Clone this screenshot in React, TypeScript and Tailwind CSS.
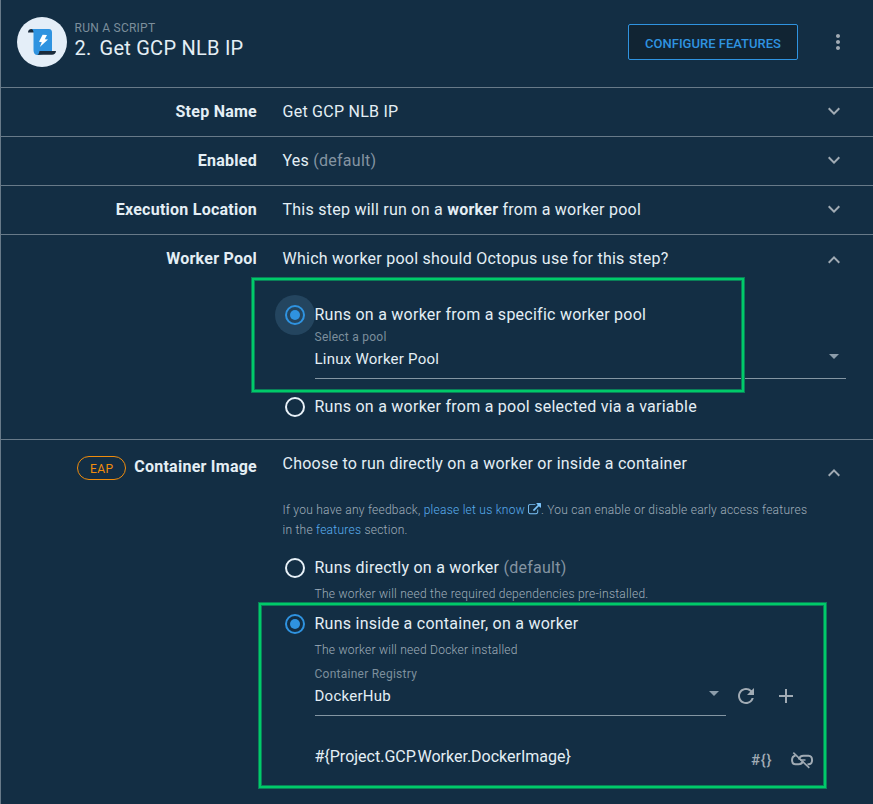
import React from "react";
import { MdAdd, MdArrowDropDown, MdExpandLess, MdExpandMore, MdMoreVert, MdRefresh } from "react-icons/md";

function ScriptIcon() {
  return (
    <svg viewBox="0 0 50 50" className="size-[50px] shrink-0">
      <circle cx="25" cy="25" r="25" fill="#e4eef8" />
      <path d="M11 15.500 Q11 12 14.500 12 H18 V15.500 Z" fill="#1a2b3c" />
      <path d="M14 12 H32 Q35 12 35 15.500 V35 L22 38 H20.500 Q16.500 38 16.500 33 V16 Q16.500 12 14 12 Z" fill="#2f93e0" />
      <path d="M22.500 34 H39 Q38.500 37.800 35 37.800 H20 Q22 37.500 22.500 34 Z" fill="#1a2b3c" />
      <path d="M25.600 17.800 L30 18 L27.800 22.200 L31 22.400 L22.800 30 L24.800 25.200 L22 24.800 Z" fill="#fff" />
    </svg>
  );
}

function ExternalLink() {
  return (
    <svg viewBox="0 0 1792 1792" className="-mt-[2px] ml-[3px] inline size-[13px]" fill="#7cc4fa">
      <path d="M1408 928v320q0 119-84.5 203.5t-203.5 84.5h-832q-119 0-203.5-84.5t-84.5-203.5v-832q0-119 84.5-203.5t203.5-84.5h704q14 0 23 9t9 23v64q0 14-9 23t-23 9h-704q-66 0-113 47t-47 113v832q0 66 47 113t113 47h832q66 0 113-47t47-113v-320q0-14 9-23t23-9h64q14 0 23 9t9 23zm384-864v512q0 26-19 45t-45 19-45-19l-176-176-652 652q-10 10-23 10t-23-10l-114-114q-10-10-10-23t10-23l652-652-176-176q-19-19-19-45t19-45 45-19h512q26 0 45 19t19 45z" />
    </svg>
  );
}

function UnlinkIcon() {
  return (
    <svg viewBox="0 0 24 20" className="mt-[3px] h-5 w-6 text-[#a1abb4]" fill="none" stroke="currentColor" strokeWidth="2">
      <path d="M5.500 5.800 C0.800 6.300 1 14.200 5.500 14.200 H8.500 C10.500 14.200 12.300 13.300 12.800 11.300" />
      <path d="M8.800 9.500 C9.500 7 11.500 5.800 13.500 5.800 H18.500 C23.200 6 23.200 14 18.800 14.200 H17.500" />
      <path d="M10 10 H15.500" strokeWidth="1.500" />
      <path d="M3.300 2.700 L19.300 17.900" strokeWidth="1.600" />
    </svg>
  );
}

function Radio({ checked = false, halo = false }: { checked?: boolean; halo?: boolean }) {
  return (
    <span className={`grid size-10 shrink-0 place-items-center rounded-full ${halo ? "bg-[#24455f]" : ""}`}>
      <span className={`grid size-5 place-items-center rounded-full border-2 ${checked ? "border-[#2f93e0]" : "border-[#e8f1f8]"}`}>
        {checked && <span className="size-[10px] rounded-full bg-[#2f93e0]" />}
      </span>
    </span>
  );
}

function Option({ checked, halo, children }: { checked?: boolean; halo?: boolean; children: React.ReactNode }) {
  return (
    <div className="-ml-[7px] flex h-5 items-center">
      <Radio checked={checked} halo={halo} />
      <span className="-ml-[0.5px]">{children}</span>
    </div>
  );
}

function Row({ label, children }: { label: string; children: React.ReactNode }) {
  return (
    <div className="flex h-[49px] items-center border-b border-[#687a89]">
      <div className="w-[256px] text-right font-bold">{label}</div>
      <div className="ml-[25.500px] flex-1">{children}</div>
      <MdExpandMore className="mr-[27px] mb-[2px] size-6 text-[#a1abb4]" />
    </div>
  );
}

const highlight = "pointer-events-none absolute border-2 border-[#00ca69] [box-shadow:0_0_0_1px_#0a7f58,inset_0_0_0_1px_#0a7f58]";

export default function App() {
  return (
    <div className="relative h-[804px] w-[873px] overflow-hidden border-l border-[#687a89] bg-[#132e44] font-['Roboto',sans-serif] text-[16px] leading-5 tracking-[0.25px] whitespace-nowrap text-[#e4eef5]">
      <header className="flex h-[88px] items-start border-b border-[#687a89] pt-[17px] pl-4">
        <ScriptIcon />
        <div className="ml-[7.500px] flex-1 pt-1">
          <div className="text-[12px] leading-[15px] text-[#7c8e9c]">RUN A SCRIPT</div>
          <h1 className="text-[20px] leading-6 font-normal">
            2.<span className="ml-2">Get GCP NLB IP</span>
          </h1>
        </div>
        <button className="mt-[7px] h-9 w-[170px] rounded-[2px] border border-[#2f93e0] bg-[#112433] pt-[3px] text-[13px] font-medium tracking-normal text-[#2f93e0]">CONFIGURE FEATURES</button>
        <MdMoreVert className="mt-[13px] mr-[23px] ml-7 size-6 text-[#a1abb4]" />
      </header>

      <Row label="Step Name">Get GCP NLB IP</Row>
      <Row label="Enabled">Yes <span className="text-[#8494a2]">(default)</span></Row>
      <Row label="Execution Location">This step will run on a <b>worker</b> from a worker pool</Row>

      <section className="flex h-[205px] items-start border-b border-[#687a89] pt-[14px]">
        <div className="w-[256px] text-right font-bold">Worker Pool</div>
        <div className="ml-[25px] w-[564px]">
          <div className="flex h-5 items-center justify-between">
            <span className="ml-[0.5px]">Which worker pool should Octopus use for this step?</span>
            <MdExpandLess className="mt-px size-6 text-[#a1abb4]" />
          </div>
          <div className="mt-9"><Option checked halo>Runs on a worker from a specific worker pool</Option></div>
          <div className="ml-[33px] border-b border-[#8496a3] pt-1">
            <div className="-ml-[0.5px] text-[12px] leading-4 text-[#7c8e9c]">Select a pool</div>
            <div className="-ml-[0.5px] flex h-[33px] items-start justify-between pt-1 text-[15px]">
              <span>Linux Worker Pool</span>
              <MdArrowDropDown className="-mt-[5px] size-6 text-[#8c9dab]" />
            </div>
          </div>
          <div className="mt-[18px]"><Option>Runs on a worker from a pool selected via a variable</Option></div>
        </div>
      </section>

      <section className="flex items-start pt-[14px]">
        <div className="flex w-[256px] items-start justify-end pt-[2px] font-bold">
          <span className="mr-[8px] grid h-6 w-[49px] place-items-center rounded-full border border-[#f08c0c] pt-px text-[12px] font-normal tracking-[0.35px] text-[#f08c0c]">EAP</span>
          <span className="pt-px">Container Image</span>
        </div>
        <div className="ml-[25px] w-[564px]">
          <div className="flex h-5 items-start justify-between">
            <span className="ml-[0.5px]">Choose to run directly on a worker or inside a container</span>
            <MdExpandLess className="mt-[7px] size-6 text-[#a1abb4]" />
          </div>
          <p className="mt-[26px] ml-[0.5px] text-[12px] leading-5 font-light text-[#a0aebb]">
            If you have any feedback, <span className="text-[#5aaef0]">please let us know</span><ExternalLink />. You can enable or disable early access features<br />
            in the <span className="text-[#5aaef0]">features</span> section.
          </p>
          <div className="mt-[18px]"><Option>Runs directly on a worker <span className="text-[#8494a2]">(default)</span></Option></div>
          <div className="mt-[6px] ml-[32.500px] text-[12px] font-light text-[#a0aebb]">The worker will need the required dependencies pre-installed.</div>
          <div className="mt-[10px]"><Option checked>Runs inside a container, on a worker</Option></div>
          <div className="mt-[6px] ml-[32.500px] text-[12px] font-light text-[#a0aebb]">The worker will need Docker installed</div>
          <div className="ml-[33px] flex items-center">
            <div className="mt-[6px] w-[411px] border-b border-[#8496a3]">
              <div className="-ml-[0.5px] text-[12px] leading-4 text-[#7c8e9c]">Container Registry</div>
              <div className="-ml-[0.5px] flex h-[33px] items-start justify-between pt-1 text-[15px]">
                <span>DockerHub</span>
                <MdArrowDropDown className="-mt-[5px] size-6 text-[#8c9dab]" />
              </div>
            </div>
            <MdRefresh className="mt-[16px] ml-2 size-6 text-[#a1abb4]" />
            <MdAdd className="mt-[16px] ml-4 size-6 text-[#a1abb4]" />
          </div>
          <div className="mt-[31px] ml-[32.500px] flex h-5 items-start">
            <span className="w-[436.500px] tracking-normal">{"#{Project.GCP.Worker.DockerImage}"}</span>
            <span className="mt-[3px] w-[39px] text-[15px] font-medium tracking-[0.7px] text-[#a1abb4]">{"#{}"}</span>
            <UnlinkIcon />
          </div>
        </div>
      </section>

      <div className={`${highlight} top-[278px] left-[251px] h-[114px] w-[492px]`} />
      <div className={`${highlight} top-[603px] left-[258px] h-[185px] w-[567px]`} />
    </div>
  );
}
